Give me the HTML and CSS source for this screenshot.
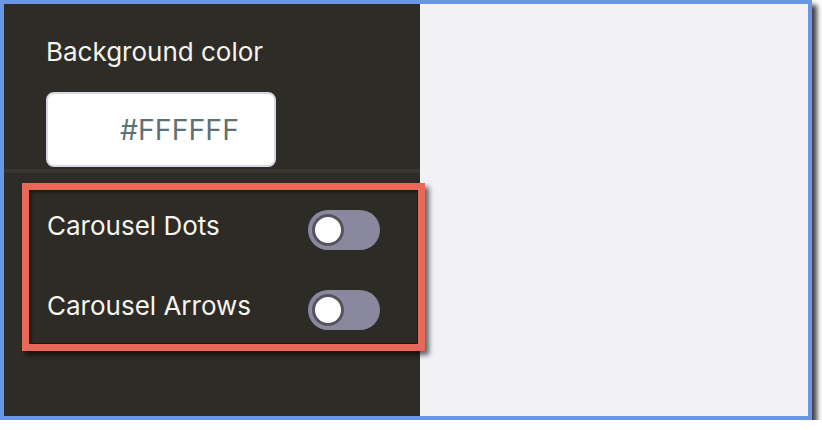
FILE: index.html
```html
<!DOCTYPE html>
<html>
<head>
<meta charset="utf-8">
<link rel="stylesheet" href="styles.css">
</head>
<body>
<div class="frame">
  <div class="panel">
    <div class="section">
      <div class="label">Background color</div>
      <div class="color-input"><span class="hex">#FFFFFF</span></div>
    </div>
    <div class="highlight">
      <div class="row">
        <span class="row-label">Carousel Dots</span>
        <span class="toggle"><span class="knob"></span></span>
      </div>
      <div class="row">
        <span class="row-label">Carousel Arrows</span>
        <span class="toggle"><span class="knob"></span></span>
      </div>
    </div>
  </div>
  <div class="preview"></div>
</div>
</body>
</html>
```
FILE: styles.css
```css
html, body {
  margin: 0;
  padding: 0;
  background: #ffffff;
  font-family: Inter, "Noto Sans", sans-serif;
}
.frame {
  box-sizing: border-box;
  width: 812px;
  height: 420px;
  border: 4px solid #6a97e3;
  box-shadow: 5px 5px 5px rgba(0, 0, 0, 0.75);
  display: flex;
}
.panel {
  width: 416px;
  background: #2e2c27;
  display: flex;
  flex-direction: column;
}
.preview {
  flex: 1;
  background: #f2f1f6;
}
.section {
  padding: 32px 0 2px 42px;
  border-bottom: 4px solid #373631;
}
.label {
  color: #f6f4ef;
  font-size: 26px;
  line-height: 32px;
  height: 32px;
  margin-bottom: 24px;
}
.color-input {
  box-sizing: border-box;
  width: 230px;
  height: 75px;
  background: #ffffff;
  border: 2px solid #d8d7e3;
  border-radius: 8px;
  display: flex;
  align-items: center;
  padding-left: 72px;
}
.hex {
  color: #5e7276;
  font-size: 28.5px;
  line-height: 32px;
}
.highlight {
  position: relative;
  z-index: 1;
  box-sizing: border-box;
  width: 403px;
  margin: 10px 0 0 18px;
  border: 7px solid #e8685a;
  background: #2c2b26;
  box-shadow: 4px 4px 5px rgba(0, 0, 0, 0.6), inset 0 0 0 1px #1b1a17, inset 2px 2px 3px rgba(0, 0, 0, 0.5);
  padding: 20px 38px 14px 18px;
  display: flex;
  flex-direction: column;
  gap: 40px;
}
.row {
  display: flex;
  align-items: center;
  justify-content: space-between;
  height: 40px;
}
.row-label {
  color: #f6f4ef;
  font-size: 26px;
  line-height: 32px;
  padding-bottom: 8px;
}
.toggle {
  box-sizing: border-box;
  width: 72px;
  height: 40px;
  border-radius: 20px;
  background: #8a889f;
  display: flex;
  align-items: center;
  padding-left: 4px;
}
.knob {
  box-sizing: border-box;
  width: 32px;
  height: 32px;
  border-radius: 50%;
  background: #ffffff;
  border: 3px solid #55545c;
}
```
